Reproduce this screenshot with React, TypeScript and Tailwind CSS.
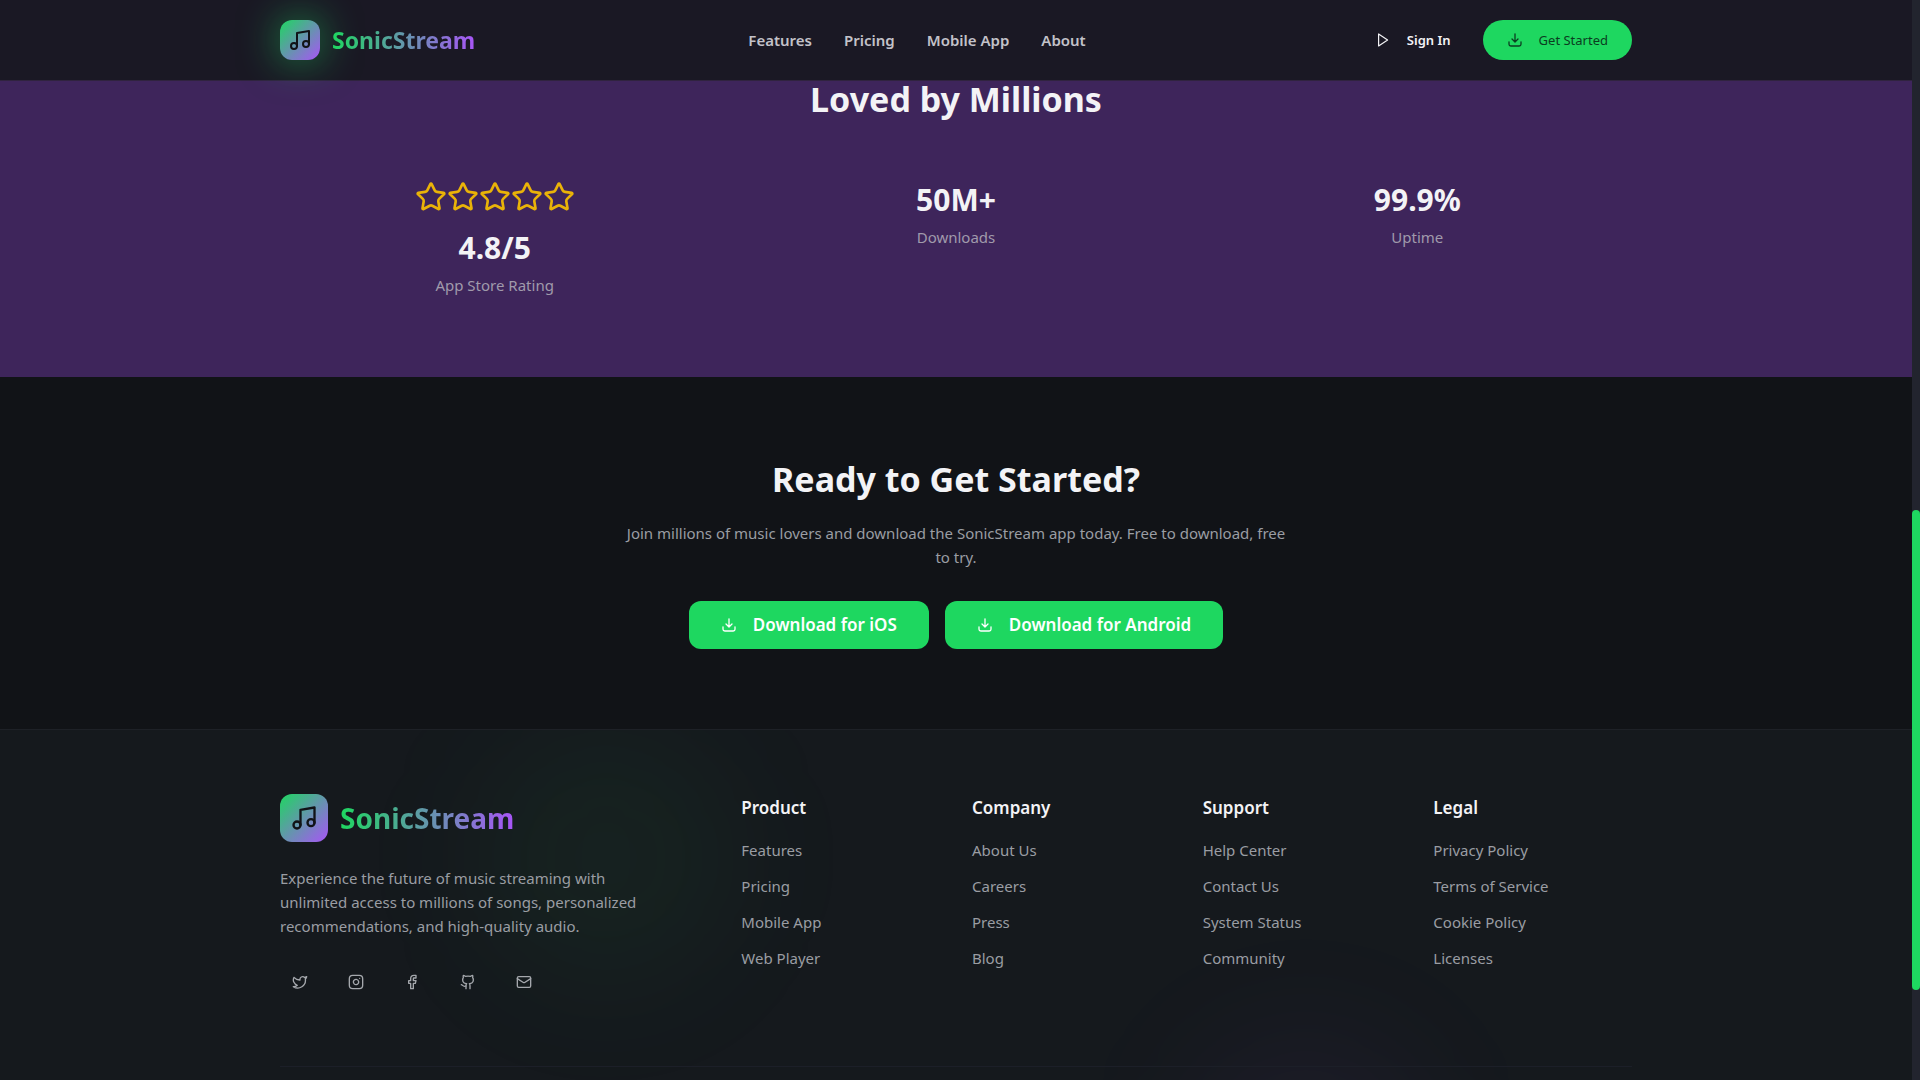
import { Facebook, Github, Instagram, Mail, Music, Star, Twitter } from "lucide-react";

const navLinks = ["Features", "Pricing", "Mobile App", "About"];

const footerColumns = [
  { title: "Product", links: ["Features", "Pricing", "Mobile App", "Web Player"] },
  { title: "Company", links: ["About Us", "Careers", "Press", "Blog"] },
  { title: "Support", links: ["Help Center", "Contact Us", "System Status", "Community"] },
  { title: "Legal", links: ["Privacy Policy", "Terms of Service", "Cookie Policy", "Licenses"] },
];

const socials = [
  { name: "Twitter", Icon: Twitter },
  { name: "Instagram", Icon: Instagram },
  { name: "Facebook", Icon: Facebook },
  { name: "GitHub", Icon: Github },
  { name: "Email", Icon: Mail },
];

function DownloadIcon() {
  return (
    <svg
      className="size-4 shrink-0"
      viewBox="0 0 16 16"
      fill="none"
      stroke="currentColor"
      strokeWidth="1.3"
      strokeLinecap="round"
      strokeLinejoin="round"
      aria-hidden="true"
    >
      <path d="M8 1.8v8M5 7l3 3 3-3M2 9.8v2.4c0 1 .7 1.8 1.8 1.8h8.4c1 0 1.8-.8 1.8-1.8V9.8" />
    </svg>
  );
}

function PlayIcon() {
  return (
    <svg
      className="size-4 shrink-0"
      viewBox="0 0 16 16"
      fill="none"
      stroke="currentColor"
      strokeWidth="1.2"
      strokeLinejoin="round"
      aria-hidden="true"
    >
      <path d="M3.6 2v12l9-6z" />
    </svg>
  );
}

export default function App() {
  return (
    <div className="relative h-screen overflow-hidden bg-[#111317] pr-2 font-['Noto_Sans','Segoe_UI',sans-serif] text-[15px] leading-6 text-[#f3f3f6]">
      {/* HEADER */}
      <header className="absolute inset-x-0 top-0 z-20 mr-2 border-b border-[#30233f] bg-[#1a1824]">
        <div className="mx-auto flex h-20 max-w-[1400px] items-center justify-between px-6">
          <a href="#" className="flex items-center gap-3">
            <span className="flex size-10 items-center justify-center rounded-xl bg-linear-to-br/srgb from-[#1ed760] to-[#a855f7] text-[#111317] shadow-[0_0_40px_rgba(30,215,96,0.6)]">
              <Music className="size-6" />
            </span>
            <span className="bg-linear-to-r/srgb from-[#1ed760] to-[#a855f7] bg-clip-text text-[23px] leading-8 font-bold text-transparent">
              SonicStream
            </span>
          </a>
          <nav className="flex items-center gap-8">
            {navLinks.map((link) => (
              <a key={link} href="#" className="font-semibold text-[#c3c2c9]">
                {link}
              </a>
            ))}
          </nav>
          <div className="flex items-center gap-4">
            <button className="flex h-10 items-center gap-4 px-4 text-[13px] font-semibold">
              <PlayIcon />
              Sign In
            </button>
            <button className="flex h-10 items-center gap-4 rounded-full bg-[#1ed760] px-6 text-[13px] text-[#0b3d20]">
              <DownloadIcon />
              Get Started
            </button>
          </div>
        </div>
      </header>

      {/* STATS */}
      <section className="bg-[#3e255b] pt-[77px] pb-20 text-center">
        <div className="mx-auto max-w-[1400px] px-6">
          <h2 className="mb-15 text-[34px] leading-11 font-bold">Loved by Millions</h2>
          <div className="grid grid-cols-3 gap-8">
            <div>
              <div className="mb-4 flex justify-center text-[#eab308]">
                {[1, 2, 3, 4, 5].map((n) => (
                  <Star key={n} className="size-8" />
                ))}
              </div>
              <div className="mb-1.5 text-3xl leading-[38px] font-bold">4.8/5</div>
              <div className="text-[#a09aab]">App Store Rating</div>
            </div>
            <div>
              <div className="mb-1.5 text-3xl leading-[38px] font-bold">50M+</div>
              <div className="text-[#a09aab]">Downloads</div>
            </div>
            <div>
              <div className="mb-1.5 text-3xl leading-[38px] font-bold">99.9%</div>
              <div className="text-[#a09aab]">Uptime</div>
            </div>
          </div>
        </div>
      </section>

      {/* CALL TO ACTION */}
      <section className="px-6 py-20 text-center">
        <h2 className="mb-5 text-[34px] leading-11 font-bold">Ready to Get Started?</h2>
        <p className="mx-auto mb-8 max-w-2xl text-[#9a9da3]">
          Join millions of music lovers and download the SonicStream app today. Free to download, free to try.
        </p>
        <div className="flex justify-center gap-4">
          <button className="flex h-12 items-center gap-4 rounded-xl bg-[#1ed760] px-8 text-[17px] font-semibold text-white">
            <DownloadIcon />
            Download for iOS
          </button>
          <button className="flex h-12 items-center gap-4 rounded-xl bg-[#1ed760] px-8 text-[17px] font-semibold text-white">
            <DownloadIcon />
            Download for Android
          </button>
        </div>
      </section>

      {/* FOOTER */}
      <footer className="relative overflow-hidden border-t border-[#1e2127] bg-[#15191d] pt-16 pb-56">
        <div className="absolute top-0 left-1/4 size-64 rounded-full bg-[#1ed760]/5 blur-3xl" />
        <div className="absolute right-1/4 bottom-0 size-64 rounded-full bg-[#a855f7]/5 blur-3xl" />
        <div className="relative mx-auto max-w-[1400px] px-6">
          <div className="mb-16 grid grid-cols-6 gap-8">
            <div className="col-span-2">
              <a href="#" className="mb-6 flex items-center gap-3">
                <span className="flex size-12 items-center justify-center rounded-xl bg-linear-to-br/srgb from-[#1ed760] to-[#a855f7] text-[#111317]">
                  <Music className="size-7" />
                </span>
                <span className="bg-linear-to-r/srgb from-[#1ed760] to-[#a855f7] bg-clip-text text-[28px] leading-10 font-bold text-transparent">
                  SonicStream
                </span>
              </a>
              <p className="mb-6 max-w-96 text-[#9a9da3]">
                Experience the future of music streaming with unlimited access to millions of songs, personalized
                recommendations, and high-quality audio.
              </p>
              <div className="flex gap-4 text-[#a5a8ad]">
                {socials.map(({ name, Icon }) => (
                  <a key={name} href="#" aria-label={name} className="flex size-10 items-center justify-center">
                    <Icon className="size-4" />
                  </a>
                ))}
              </div>
            </div>
            {footerColumns.map((column) => (
              <div key={column.title}>
                <h3 className="mb-4 text-[17px] leading-7 font-semibold">{column.title}</h3>
                <ul className="space-y-3">
                  {column.links.map((link) => (
                    <li key={link}>
                      <a href="#" className="text-[#9a9da3]">
                        {link}
                      </a>
                    </li>
                  ))}
                </ul>
              </div>
            ))}
          </div>
          <hr className="border-[#1c1f28]" />
        </div>
      </footer>

      {/* SCROLLBAR */}
      <div className="absolute inset-y-0 right-0 z-30 w-2 bg-[#22242e]">
        <div className="absolute inset-x-0 top-[47.2%] bottom-[8.3%] rounded-full bg-[#1ed760]" />
      </div>
    </div>
  );
}
